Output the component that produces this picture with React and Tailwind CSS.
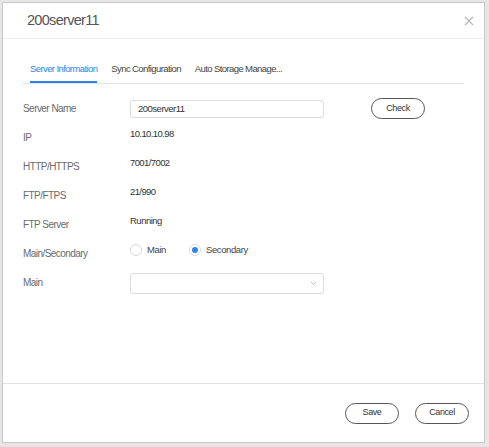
import React, { useState } from "react";

const font = { fontFamily: '"Liberation Sans", Arial, sans-serif' };

function Row({ label, children, valueClass = "" }) {
  return (
    <div className="flex h-[29px] items-center">
      <div className="w-[107px] text-[10px] tracking-[-0.55px] text-[#6b6b6b]">{label}</div>
      <div className={`flex-1 flex items-center ${valueClass}`}>{children}</div>
    </div>
  );
}

function Radio({ checked, label }) {
  return (
    <label className="flex items-center gap-[5px] text-[9.5px] tracking-[-0.4px] text-[#444]">
      <span className="w-[12px] h-[12px] rounded-full border border-[#d9d9d9] bg-white flex items-center justify-center">
        {checked && <span className="w-[6px] h-[6px] rounded-full bg-[#2d86ee]" />}
      </span>
      {label}
    </label>
  );
}

const btn =
  "w-[54px] h-[21px] rounded-full border border-[#555] text-[9px] tracking-[-0.4px] text-[#333] bg-white";

export default function App() {
  const [name, setName] = useState("200server11");
  const [role, setRole] = useState("secondary");

  const tabs = ["Server Information", "Sync Configuration", "Auto Storage Manage..."];

  return (
    <div className="w-[489px] h-[447px] bg-[#e6e6e6] pt-[2px] pl-[2px]" style={font}>
      <div className="w-[483px] h-[441px] bg-white border border-[#c8c8c8] flex flex-col">
        {/* Header */}
        <div className="h-[36px] shrink-0 flex items-center justify-between pl-[24px] pr-[10px] border-b border-[#ededed]">
          <span className="text-[14.5px] tracking-[-0.7px] text-[#555]">200server11</span>
          <svg width="10" height="10" viewBox="0 0 10 10">
            <path d="M1 1 L9 9 M9 1 L1 9" stroke="#b5b5b5" strokeWidth="1.1" />
          </svg>
        </div>

        {/* Body */}
        <div className="flex-1 px-[20px]">
          <div className="mt-[18px] flex border-b border-[#e3e3e3]">
            {tabs.map((t, i) => (
              <div key={t} className="px-[7px]">
                <div
                  className={`h-[26px] flex items-center text-[9.5px] tracking-[-0.6px] whitespace-nowrap ${
                    i === 0
                      ? "text-[#2d86ee] border-b-2 border-[#2d86ee]"
                      : "text-[#444] border-b-2 border-transparent"
                  }`}
                >
                  {t}
                </div>
              </div>
            ))}
          </div>

          <div className="mt-[10px]">
            <Row label="Server Name">
              <input
                value={name}
                onChange={(e) => setName(e.target.value)}
                className="w-[194px] h-[18px] border border-[#dcdcdc] rounded-[3px] px-[7px] text-[9.5px] tracking-[-0.5px] text-[#333] outline-none"
                style={font}
              />
              <button className={`ml-[47px] ${btn}`}>Check</button>
            </Row>
            <Row label="IP" valueClass="-mt-[7px] text-[9.5px] tracking-[-0.6px] text-[#333]">10.10.10.98</Row>
            <Row label="HTTP/HTTPS" valueClass="-mt-[7px] text-[9.5px] tracking-[-0.6px] text-[#333]">7001/7002</Row>
            <Row label="FTP/FTPS" valueClass="-mt-[7px] text-[9.5px] tracking-[-0.6px] text-[#333]">21/990</Row>
            <Row label="FTP Server" valueClass="-mt-[7px] text-[9.5px] tracking-[-0.5px] text-[#333]">Running</Row>
            <Row label="Main/Secondary" valueClass="-mt-[7px] gap-[23px]">
              <span onClick={() => setRole("main")}>
                <Radio checked={role === "main"} label="Main" />
              </span>
              <span onClick={() => setRole("secondary")}>
                <Radio checked={role === "secondary"} label="Secondary" />
              </span>
            </Row>
            <Row label="Main" valueClass="mt-[2px]">
              <div className="w-[194px] h-[21px] border border-[#dcdcdc] rounded-[3px] flex items-center justify-end pr-[6px]">
                <svg width="7" height="5" viewBox="0 0 7 5">
                  <path d="M1 1 L3.5 3.5 L6 1" stroke="#bbb" strokeWidth="1" fill="none" />
                </svg>
              </div>
            </Row>
          </div>
        </div>

        {/* Footer */}
        <div className="h-[59px] shrink-0 border-t border-[#e3e3e3] flex items-center justify-end gap-[16px] pr-[15px]">
          <button className={btn}>Save</button>
          <button className={btn}>Cancel</button>
        </div>
      </div>
    </div>
  );
}
